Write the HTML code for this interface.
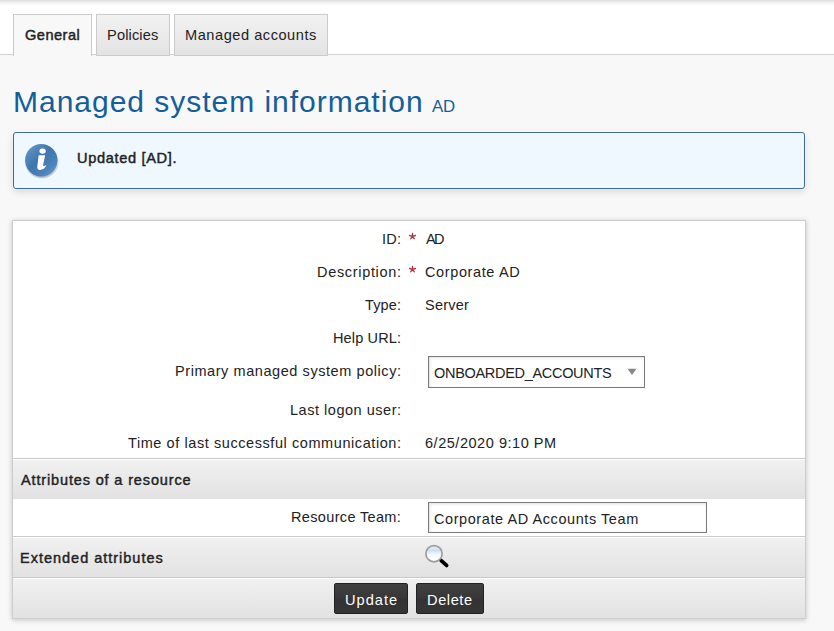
<!DOCTYPE html>
<html><head><meta charset="utf-8">
<style>
*{box-sizing:border-box;margin:0;padding:0}
html,body{width:834px;height:631px;overflow:hidden;background:#f8f8f8;font-family:"Liberation Sans",sans-serif;color:#222}
.a{position:absolute}
.t{position:absolute;white-space:nowrap;line-height:20px;height:20px}
#top{left:0;top:0;width:834px;height:55px;background:#fff;border-bottom:1px solid #d2d2d2}
#topshadow{left:0;top:0;width:834px;height:6px;background:linear-gradient(#dcdcdc,#ededed 30%,#f8f8f8 65%,#fff)}
.tab{top:14px;height:42px;border:1px solid #cbcbcb;background:linear-gradient(#f2f2f2,#e3e3e3)}
.tab.act{background:#f8f8f8;border-bottom:none;height:42px}
#info{left:13px;top:132px;width:792px;height:57px;background:#eff8fe;border:1px solid #3f6a95;border-radius:3px;box-shadow:0 0 0 1px rgba(255,255,255,.35),0 3px 7px rgba(0,0,0,.13)}
#panel{left:12px;top:220px;width:794px;height:399px;background:#fff;border:1px solid #cdcdcd;box-shadow:0 1px 5px rgba(0,0,0,.22)}
.sec{left:13px;width:792px;border-top:1px solid #c8c8c8;box-shadow:inset 0 1px 0 #fff;background:linear-gradient(#f1f1f1,#e2e2e2)}
.inp{background:#fff;border:1px solid #7a7a7a;box-shadow:inset 1px 1px 3px rgba(0,0,0,.12)}
.btn{top:583px;height:31px;background:linear-gradient(#414141,#383838 45%,#333 55%,#363636);border:1px solid #222;border-radius:2px}
</style></head><body>
<div id="top" class="a"></div>
<div id="topshadow" class="a"></div>
<div class="a tab act" style="left:13px;width:79px"></div>
<div class="a tab" style="left:96px;width:74px"></div>
<div class="a tab" style="left:174px;width:154px"></div>

<div id="info" class="a"></div>
<svg class="a" style="left:22px;top:141px" width="40" height="40" viewBox="0 0 40 40">
  <defs>
    <linearGradient id="ig" x1="0" y1="0" x2="1" y2="1">
      <stop offset="0" stop-color="#6c9ccb"/>
      <stop offset="0.45" stop-color="#3f76ad"/>
      <stop offset="0.75" stop-color="#4c84ba"/>
      <stop offset="1" stop-color="#77a6d2"/>
    </linearGradient>
    <radialGradient id="ish" cx="50%" cy="55%" r="50%">
      <stop offset="0.8" stop-color="rgba(0,0,0,.25)"/>
      <stop offset="1" stop-color="rgba(0,0,0,0)"/>
    </radialGradient>
  </defs>
  <circle cx="19.8" cy="20" r="17.5" fill="url(#ish)"/>
  <circle cx="19.3" cy="19.2" r="16.2" fill="url(#ig)"/>
  <ellipse cx="20.6" cy="10.1" rx="3.2" ry="2.6" fill="#fff"/>
  <path d="M16.6 14.3 L23.2 14.3 L21.1 24.0 Q20.8 25.5 22.1 24.9 L24.2 23.9 Q23.3 27.4 19.7 28.6 Q15.0 29.8 15.3 25.8 Z" fill="#fff"/>
</svg>

<div id="panel" class="a"></div>
<svg class="a" style="left:405px;top:229px" width="15" height="15" viewBox="0 0 15 15"><g stroke="#ad3038" stroke-width="1.35" stroke-linecap="round" fill="none"><path d="M7.5 4.4 V7.4 M7.5 7.4 L4.6 6.5 M7.5 7.4 L10.4 6.5 M7.5 7.4 L5.8 9.7 M7.5 7.4 L9.2 9.7"/></g></svg>
<svg class="a" style="left:405px;top:262px" width="15" height="15" viewBox="0 0 15 15"><g stroke="#ad3038" stroke-width="1.35" stroke-linecap="round" fill="none"><path d="M7.5 4.4 V7.4 M7.5 7.4 L4.6 6.5 M7.5 7.4 L10.4 6.5 M7.5 7.4 L5.8 9.7 M7.5 7.4 L9.2 9.7"/></g></svg>

<div class="a inp" style="left:428px;top:356px;width:217px;height:32px"></div>
<svg class="a" style="left:626px;top:367px" width="12" height="10" viewBox="0 0 12 10"><path d="M1.5 1.7 H10.5 L6 8 Z" fill="#888"/></svg>

<div class="a sec" style="top:458px;height:41px"></div>
<div class="a inp" style="left:428px;top:502px;width:279px;height:31px"></div>
<div class="a sec" style="top:536px;height:41px"></div>
<svg class="a" style="left:420px;top:540px" width="32" height="32" viewBox="0 0 32 32">
  <defs>
    <linearGradient id="mg" x1="0" y1="0" x2="0" y2="1">
      <stop offset="0" stop-color="#eef5fb"/>
      <stop offset="0.3" stop-color="#c9e0f3"/>
      <stop offset="0.55" stop-color="#f4f9fd"/>
      <stop offset="1" stop-color="#ffffff"/>
    </linearGradient>
  </defs>
  <path d="M21.2 20.6 L26.6 25.4" stroke="#000" stroke-width="3.8" stroke-linecap="round"/>
  <circle cx="14" cy="13.7" r="8.1" fill="url(#mg)" stroke="#9d9d9d" stroke-width="1.7"/>
</svg>
<div class="a sec" style="top:577px;height:41px"></div>
<div class="a btn" style="left:334px;width:74px"></div>
<div class="a btn" style="left:416px;width:68px"></div>
<div class="t" style="left:25.00px;top:24.94px;font-size:14.6px;font-weight:normal;-webkit-text-stroke:0.45px #222;color:#222;letter-spacing:0.471px;">General</div>
<div class="t" style="left:107.00px;top:24.94px;font-size:14.6px;font-weight:normal;color:#222;letter-spacing:0.144px;">Policies</div>
<div class="t" style="left:185.00px;top:24.94px;font-size:14.6px;font-weight:normal;color:#222;letter-spacing:0.532px;">Managed accounts</div>
<div class="t" style="left:13.00px;top:92.30px;font-size:30px;font-weight:normal;color:#135e9b;letter-spacing:0.980px;">Managed system information</div>
<div class="t" style="left:432.00px;top:96.88px;font-size:16.8px;font-weight:normal;color:#135e9b;letter-spacing:-0.193px;">AD</div>
<div class="t" style="left:77.00px;top:147.64px;font-size:14.6px;font-weight:normal;-webkit-text-stroke:0.45px #222;color:#222;letter-spacing:0.657px;">Updated [AD].</div>
<div class="t" style="left:382.00px;top:229.27px;font-size:14.5px;font-weight:normal;color:#222;letter-spacing:0.250px;">ID:</div>
<div class="t" style="left:317.00px;top:261.97px;font-size:14.5px;font-weight:normal;color:#222;letter-spacing:0.679px;">Description:</div>
<div class="t" style="left:365.00px;top:294.97px;font-size:14.5px;font-weight:normal;color:#222;letter-spacing:0.141px;">Type:</div>
<div class="t" style="left:333.00px;top:328.37px;font-size:14.5px;font-weight:normal;color:#222;letter-spacing:0.143px;">Help URL:</div>
<div class="t" style="left:175.00px;top:360.97px;font-size:14.5px;font-weight:normal;color:#222;letter-spacing:0.569px;">Primary managed system policy:</div>
<div class="t" style="left:290.00px;top:399.97px;font-size:14.5px;font-weight:normal;color:#222;letter-spacing:0.523px;">Last logon user:</div>
<div class="t" style="left:128.00px;top:432.77px;font-size:14.5px;font-weight:normal;color:#222;letter-spacing:0.577px;">Time of last successful communication:</div>
<div class="t" style="left:291.00px;top:506.97px;font-size:14.5px;font-weight:normal;color:#222;letter-spacing:0.343px;">Resource Team:</div>
<div class="t" style="left:426.00px;top:229.27px;font-size:14.5px;font-weight:normal;color:#222;letter-spacing:-1.671px;">AD</div>
<div class="t" style="left:425.00px;top:261.97px;font-size:14.5px;font-weight:normal;color:#222;letter-spacing:0.620px;">Corporate AD</div>
<div class="t" style="left:425.00px;top:294.97px;font-size:14.5px;font-weight:normal;color:#222;letter-spacing:0.224px;">Server</div>
<div class="t" style="left:434.00px;top:362.97px;font-size:14.5px;font-weight:normal;color:#222;letter-spacing:-0.307px;">ONBOARDED_ACCOUNTS</div>
<div class="t" style="left:425.00px;top:432.97px;font-size:14.5px;font-weight:normal;color:#222;letter-spacing:0.534px;">6/25/2020 9:10 PM</div>
<div class="t" style="left:434.00px;top:508.97px;font-size:14.5px;font-weight:normal;color:#222;letter-spacing:0.571px;">Corporate AD Accounts Team</div>
<div class="t" style="left:21.00px;top:469.97px;font-size:14.5px;font-weight:normal;-webkit-text-stroke:0.45px #222;color:#222;letter-spacing:0.855px;text-shadow:0 1px 0 #fff;">Attributes of a resource</div>
<div class="t" style="left:20.00px;top:547.97px;font-size:14.5px;font-weight:normal;-webkit-text-stroke:0.45px #222;color:#222;letter-spacing:0.989px;text-shadow:0 1px 0 #fff;">Extended attributes</div>
<div class="t" style="left:345.00px;top:589.84px;font-size:14.6px;font-weight:normal;color:#fff;letter-spacing:1.011px;">Update</div>
<div class="t" style="left:427.00px;top:589.94px;font-size:14.6px;font-weight:normal;color:#fff;letter-spacing:0.586px;">Delete</div>
</body></html>
